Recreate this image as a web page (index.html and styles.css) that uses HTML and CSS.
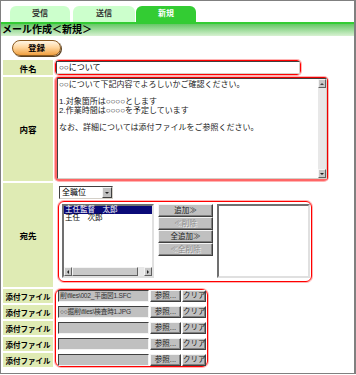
FILE: index.html
```html
<!DOCTYPE html>
<html lang="ja">
<head>
    <meta charset="UTF-8">
    <meta name="viewport" content="width=device-width, initial-scale=1.0">
    <title>メール作成</title>
    <link rel="stylesheet" href="styles.css">
</head>
<body>
    <div class="frame">
        <div class="tabs">
            <div class="tab">受信</div>
            <div class="tab tab-send">送信</div>
            <div class="tab tab-new active">新規</div>
        </div>
        <div class="title">メール作成＜新規＞</div>
        <div class="toolbar">
            <button class="save">登録</button>
        </div>

        <table class="form">
            <colgroup>
                <col class="col-label">
                <col class="col-value">
            </colgroup>
            <tr class="row-subject">
                <th>件名</th>
                <td>
                    <div class="mark mark-subject">
                        <div class="field">○○について</div>
                    </div>
                </td>
            </tr>
            <tr class="row-body">
                <th>内容</th>
                <td>
                    <div class="mark mark-body">
                        <div class="memo">
                            <div class="memo-text">○○について下記内容でよろしいかご確認ください。

1.対象箇所は○○○○とします
2.作業時間は○○○○を予定しています

なお、詳細については添付ファイルをご参照ください。</div>
                            <div class="vscroll">
                                <span class="arrow-box"><i class="tri tri-up"></i></span>
                                <span class="track"></span>
                                <span class="arrow-box"><i class="tri tri-down"></i></span>
                            </div>
                        </div>
                    </div>
                </td>
            </tr>
            <tr class="row-to">
                <th>宛先</th>
                <td class="to-cell">
                    <div class="select">
                        <span class="select-text">全職位</span>
                        <span class="select-arrow"><i class="tri tri-down"></i></span>
                    </div>
                    <div class="mark mark-to">
                        <div class="listbox">
                            <div class="items">
                                <div class="item selected">主任監督　太郎</div>
                                <div class="item">主任　次郎</div>
                            </div>
                            <div class="hscroll">
                                <span class="arrow-box"><i class="tri tri-left"></i></span>
                                <span class="thumb"></span>
                                <span class="track"></span>
                                <span class="arrow-box"><i class="tri tri-right"></i></span>
                            </div>
                        </div>
                        <div class="move-buttons">
                            <button class="btn">追加≫</button>
                            <button class="btn" disabled>≪削除</button>
                            <button class="btn">全追加≫</button>
                            <button class="btn" disabled>≪全削除</button>
                        </div>
                        <div class="listbox listbox-empty"></div>
                    </div>
                </td>
            </tr>
            <tr class="row-file">
                <th>添付ファイル</th>
                <td rowspan="5">
                    <div class="mark mark-files">
                        <div class="file-row">
                            <div class="file-input">削\files\002_平面図1.SFC</div>
                            <button class="btn btn-ref">参照...</button>
                            <button class="btn btn-clear">クリア</button>
                        </div>
                        <div class="file-row">
                            <div class="file-input">○○掘削\files\検査時1.JPG</div>
                            <button class="btn btn-ref">参照...</button>
                            <button class="btn btn-clear">クリア</button>
                        </div>
                        <div class="file-row">
                            <div class="file-input"></div>
                            <button class="btn btn-ref">参照...</button>
                            <button class="btn btn-clear">クリア</button>
                        </div>
                        <div class="file-row">
                            <div class="file-input"></div>
                            <button class="btn btn-ref">参照...</button>
                            <button class="btn btn-clear">クリア</button>
                        </div>
                        <div class="file-row">
                            <div class="file-input"></div>
                            <button class="btn btn-ref">参照...</button>
                            <button class="btn btn-clear">クリア</button>
                        </div>
                    </div>
                </td>
            </tr>
            <tr class="row-file"><th>添付ファイル</th></tr>
            <tr class="row-file"><th>添付ファイル</th></tr>
            <tr class="row-file"><th>添付ファイル</th></tr>
            <tr class="row-file"><th>添付ファイル</th></tr>
        </table>
    </div>
</body>
</html>
```

FILE: styles.css
```css
* {
    box-sizing: border-box;
}

body {
    margin: 0;
    font-family: "Liberation Sans", "Noto Sans CJK JP", sans-serif;
    color: #000;
}

.frame {
    width: 356px;
    height: 374px;
    border: 1px solid #808080;
    border-right-width: 2px;
    overflow: hidden;
    background: #fff;
}

/* タブ */
.tabs {
    display: flex;
    height: 21px;
    padding: 5px 0 0 9px;
}

.tab {
    width: 60px;
    height: 16px;
    background: #ccffcc;
    border-radius: 6px 6px 0 0;
    font-size: 8px;
    font-weight: bold;
    line-height: 16px;
    text-align: center;
    color: #333;
}

.tab-send {
    width: 62px;
    margin-left: 3px;
}

.tab-new {
    margin-left: 1px;
}

.tab.active {
    background: #33cc33;
    color: #fff;
}

.title {
    height: 14px;
    border-top: 2px solid #33cc33;
    background: linear-gradient(#66c866, #d8f2d2);
    padding-left: 1px;
    font-size: 10px;
    font-weight: bold;
    line-height: 12px;
}

.toolbar {
    height: 22px;
    padding: 4px 0 0 11px;
}

.save {
    display: block;
    width: 49px;
    height: 16px;
    padding: 0;
    border: 1px solid #8a5a20;
    border-radius: 8px;
    background: linear-gradient(#fff6e6, #ffd7a0 45%, #f0a040);
    box-shadow: 1px 1px 0 #5a4020;
    font-family: inherit;
    font-size: 8.5px;
    font-weight: bold;
    line-height: 14px;
}

/* フォーム */
.form {
    width: 353px;
    border-spacing: 2px;
    table-layout: fixed;
}

.col-label {
    width: 50px;
}

.form th {
    padding: 0;
    background: #dfebb4;
    font-size: 8.5px;
    font-weight: bold;
    text-align: center;
    white-space: nowrap;
}

.form td {
    padding: 0;
    vertical-align: top;
}

.row-subject th,
.row-subject td {
    height: 15px;
}

.row-body th,
.row-body td {
    height: 104px;
}

.row-to th,
.row-to td {
    height: 104px;
}

.row-file th {
    height: 14px;
    font-size: 7.5px;
}

/* 赤枠 */
.mark {
    border: 1px solid #f00;
    border-radius: 4px;
    box-shadow: 0 0 0 1px #ffb4b4;
}

.mark-subject {
    width: 246px;
    height: 15px;
}

.field {
    height: 13px;
    border: 1px solid;
    border-color: #404040 #d4d0c8 #d4d0c8 #404040;
    background: #fff;
    padding-left: 2px;
    font-size: 8px;
    line-height: 11px;
}

.mark-body {
    width: 273px;
    height: 104px;
    border-width: 1px 1px 2px 2px;
    border-color: #e00 #e00 #f66 #f66;
}

.memo {
    display: flex;
    height: 100%;
    border: 1px solid;
    border-color: #404040 #d4d0c8 #d4d0c8 #404040;
    background: #fff;
}

.memo-text {
    flex: 1;
    padding: 2px 1px;
    font-size: 8px;
    line-height: 8.6px;
    white-space: pre;
    overflow: hidden;
    color: #222;
}

.vscroll {
    display: flex;
    flex-direction: column;
    width: 8px;
    background: #e8e8e8;
}

.vscroll .track {
    flex: 1;
}

.arrow-box {
    display: flex;
    align-items: center;
    justify-content: center;
    width: 8px;
    height: 9px;
    background: #c8c8c8;
    border: 1px solid;
    border-color: #f4f4f4 #606060 #606060 #f4f4f4;
}

.tri {
    display: block;
    width: 0;
    height: 0;
    border: 2px solid transparent;
}

.tri-up {
    border-top-width: 0;
    border-bottom-color: #444;
}

.tri-down {
    border-bottom-width: 0;
    border-top-color: #222;
}

.tri-left {
    border-left-width: 0;
    border-right-color: #222;
}

.tri-right {
    border-right-width: 0;
    border-left-color: #222;
}

/* 宛先 */
.to-cell {
    padding: 3px 0 0 3px !important;
}

.select {
    display: flex;
    width: 54px;
    height: 13px;
    margin-left: 1px;
    border: 1px solid;
    border-color: #404040 #d4d0c8 #d4d0c8 #404040;
    background: #fff;
}

.select-text {
    flex: 1;
    padding-left: 2px;
    font-size: 8px;
    line-height: 11px;
}

.select-arrow {
    display: flex;
    align-items: center;
    justify-content: center;
    width: 10px;
    background: #c0c0c0;
    border: 1px solid;
    border-color: #f4f4f4 #404040 #404040 #f4f4f4;
}

.mark-to {
    display: flex;
    gap: 4px;
    width: 254px;
    height: 81px;
    margin-top: 2px;
    padding: 2px 1px 2px 3px;
    border-radius: 6px;
}

.listbox {
    display: flex;
    flex-direction: column;
    width: 92px;
    height: 74px;
    border: 2px solid;
    border-color: #707070 #e0e0e0 #e0e0e0 #707070;
    background: #fff;
}

.listbox-empty {
    width: 93px;
}

.items {
    flex: 1;
    font-size: 7.5px;
    line-height: 8px;
}

.item {
    padding-left: 1px;
    white-space: nowrap;
}

.item.selected {
    background: #0a0a78;
    color: #fff;
}

.hscroll {
    display: flex;
    height: 9px;
    background: #e8e8e8;
}

.hscroll .arrow-box {
    height: 9px;
}

.hscroll .thumb {
    width: 66px;
    background: #c8c8c8;
    border: 1px solid;
    border-color: #f4f4f4 #606060 #606060 #f4f4f4;
}

.hscroll .track {
    flex: 1;
}

.move-buttons {
    display: flex;
    flex-direction: column;
    width: 55px;
}

.btn {
    height: 13px;
    padding: 0;
    background: #c0c0c0;
    border: 1px solid;
    border-color: #f4f4f4 #404040 #404040 #f4f4f4;
    box-shadow: inset -1px -1px 0 #808080;
    font-family: inherit;
    font-size: 7.5px;
    line-height: 10px;
    color: #222;
    white-space: nowrap;
}

.btn:disabled {
    color: #8c8c8c;
    text-shadow: 1px 1px 0 #f0f0f0;
}

/* 添付ファイル */
.mark-files {
    display: flex;
    flex-direction: column;
    gap: 4px;
    width: 153px;
    height: 78px;
    padding: 0 0 0 2px;
    border-radius: 6px;
}

.file-row {
    display: flex;
    align-items: center;
    gap: 1px;
    height: 12px;
}

.file-input {
    width: 91px;
    height: 12px;
    border: 1px solid;
    border-color: #404040 #f4f4f4 #f4f4f4 #404040;
    background: #c0c0c0;
    padding-left: 1px;
    font-size: 6.6px;
    letter-spacing: -0.2px;
    line-height: 10px;
    color: #333;
    white-space: nowrap;
    overflow: hidden;
}

.btn-ref {
    width: 31px;
    height: 12px;
}

.btn-clear {
    width: 24px;
    height: 12px;
}
```
